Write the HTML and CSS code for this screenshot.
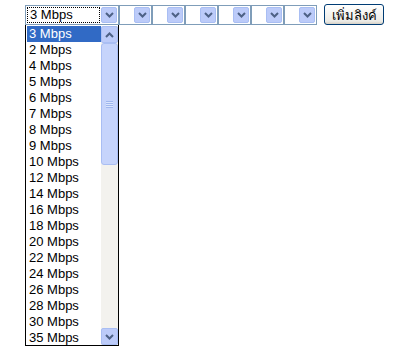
FILE: index.html
```html
<!DOCTYPE html>
<html lang="th">
<head>
  <meta charset="UTF-8">
  <title>Speed select</title>
  <link rel="stylesheet" href="styles.css">
</head>
<body>

<div class="page">
  <div class="row">
    <div class="select wide">
      <span class="value"><span class="focus">3 Mbps</span></span>
      <span class="arrow"><svg width="9" height="6" viewBox="0 0 9 6"><path d="M1 1 L4.5 4.5 L8 1" fill="none" stroke="#4d6185" stroke-width="2"/></svg></span>
    </div>
    <div class="select"><span class="value"></span><span class="arrow"><svg width="9" height="6" viewBox="0 0 9 6"><path d="M1 1 L4.5 4.5 L8 1" fill="none" stroke="#4d6185" stroke-width="2"/></svg></span></div>
    <div class="select"><span class="value"></span><span class="arrow"><svg width="9" height="6" viewBox="0 0 9 6"><path d="M1 1 L4.5 4.5 L8 1" fill="none" stroke="#4d6185" stroke-width="2"/></svg></span></div>
    <div class="select"><span class="value"></span><span class="arrow"><svg width="9" height="6" viewBox="0 0 9 6"><path d="M1 1 L4.5 4.5 L8 1" fill="none" stroke="#4d6185" stroke-width="2"/></svg></span></div>
    <div class="select"><span class="value"></span><span class="arrow"><svg width="9" height="6" viewBox="0 0 9 6"><path d="M1 1 L4.5 4.5 L8 1" fill="none" stroke="#4d6185" stroke-width="2"/></svg></span></div>
    <div class="select"><span class="value"></span><span class="arrow"><svg width="9" height="6" viewBox="0 0 9 6"><path d="M1 1 L4.5 4.5 L8 1" fill="none" stroke="#4d6185" stroke-width="2"/></svg></span></div>
    <div class="select"><span class="value"></span><span class="arrow"><svg width="9" height="6" viewBox="0 0 9 6"><path d="M1 1 L4.5 4.5 L8 1" fill="none" stroke="#4d6185" stroke-width="2"/></svg></span></div>
    <button class="add-btn">เพิ่มลิงค์</button>
  </div>

  <div class="dropdown">
    <ul class="options">
      <li class="selected">3 Mbps</li>
      <li>2 Mbps</li>
      <li>4 Mbps</li>
      <li>5 Mbps</li>
      <li>6 Mbps</li>
      <li>7 Mbps</li>
      <li>8 Mbps</li>
      <li>9 Mbps</li>
      <li>10 Mbps</li>
      <li>12 Mbps</li>
      <li>14 Mbps</li>
      <li>16 Mbps</li>
      <li>18 Mbps</li>
      <li>20 Mbps</li>
      <li>22 Mbps</li>
      <li>24 Mbps</li>
      <li>26 Mbps</li>
      <li>28 Mbps</li>
      <li>30 Mbps</li>
      <li>35 Mbps</li>
    </ul>
    <div class="scrollbar">
      <span class="sb-btn"><svg width="9" height="6" viewBox="0 0 9 6"><path d="M1 5 L4.5 1.5 L8 5" fill="none" stroke="#4d6185" stroke-width="2"/></svg></span>
      <div class="track">
        <div class="thumb"><span class="grip"></span></div>
      </div>
      <span class="sb-btn"><svg width="9" height="6" viewBox="0 0 9 6"><path d="M1 1 L4.5 4.5 L8 1" fill="none" stroke="#4d6185" stroke-width="2"/></svg></span>
    </div>
  </div>
</div>

</body>
</html>
```

FILE: styles.css
```css
body { margin: 0; background: #fff; font-family: Arial, "Liberation Sans", sans-serif; font-size: 13px; color: #000; }
.page { padding: 5px 0 0 25px; }
.row { display: flex; align-items: flex-start; }

.select {
  display: flex;
  box-sizing: border-box;
  width: 33px;
  height: 20px;
  border: 1px solid #7f9db9;
  background: #fff;
}
.select.wide { width: 94px; }
.value { flex: 1; display: flex; padding: 1px; }
.focus {
  flex: 1;
  border: 1px dotted #000;
  line-height: 14px;
  padding-left: 2px;
}
.arrow {
  box-sizing: border-box;
  width: 16px;
  height: 16px;
  margin: 1px 1px 0 0;
  display: flex;
  align-items: center;
  justify-content: center;
  background: #bccbf9;
  border: 1px solid #a9bef3;
  border-radius: 2px;
}

.add-btn {
  margin: -1px 0 0 7px;
  width: 60px;
  height: 21px;
  padding: 0 0 2px;
  font-family: Tahoma, "Liberation Sans", sans-serif;
  font-size: 13px;
  color: #000;
  background: linear-gradient(#ffffff, #ecebe6 85%, #d6d0c5);
  border: 1px solid #003c74;
  border-radius: 3px;
}

/* open list of the first select */
.dropdown {
  width: 94px;
  height: 322px;
  margin-top: -1px;
  box-sizing: border-box;
  border: 1px solid #000;
  background: #fff;
  display: flex;
  padding: 1px 0 0 1px;
}
.options { list-style: none; margin: 0; padding: 0; flex: 1; }
.options li { height: 16px; line-height: 16px; padding-left: 2px; }
.options li.selected { background: #316ac5; color: #fff; }

.scrollbar {
  width: 17px;
  display: flex;
  flex-direction: column;
  background: #f3f2ee;
}
.sb-btn {
  box-sizing: border-box;
  height: 17px;
  display: flex;
  align-items: center;
  justify-content: center;
  background: #bccbf9;
  border: 1px solid #a9bef3;
  border-radius: 2px;
}
.track { flex: 1; }
.thumb {
  box-sizing: border-box;
  height: 122px;
  border: 1px solid #a9bef3;
  border-radius: 3px;
  background: #c6d4fb;
  display: flex;
  align-items: center;
  justify-content: center;
}
.grip {
  width: 7px;
  height: 7px;
  background: repeating-linear-gradient(#9fb6ee 0 1px, #dbe6fd 1px 2px);
}
```
